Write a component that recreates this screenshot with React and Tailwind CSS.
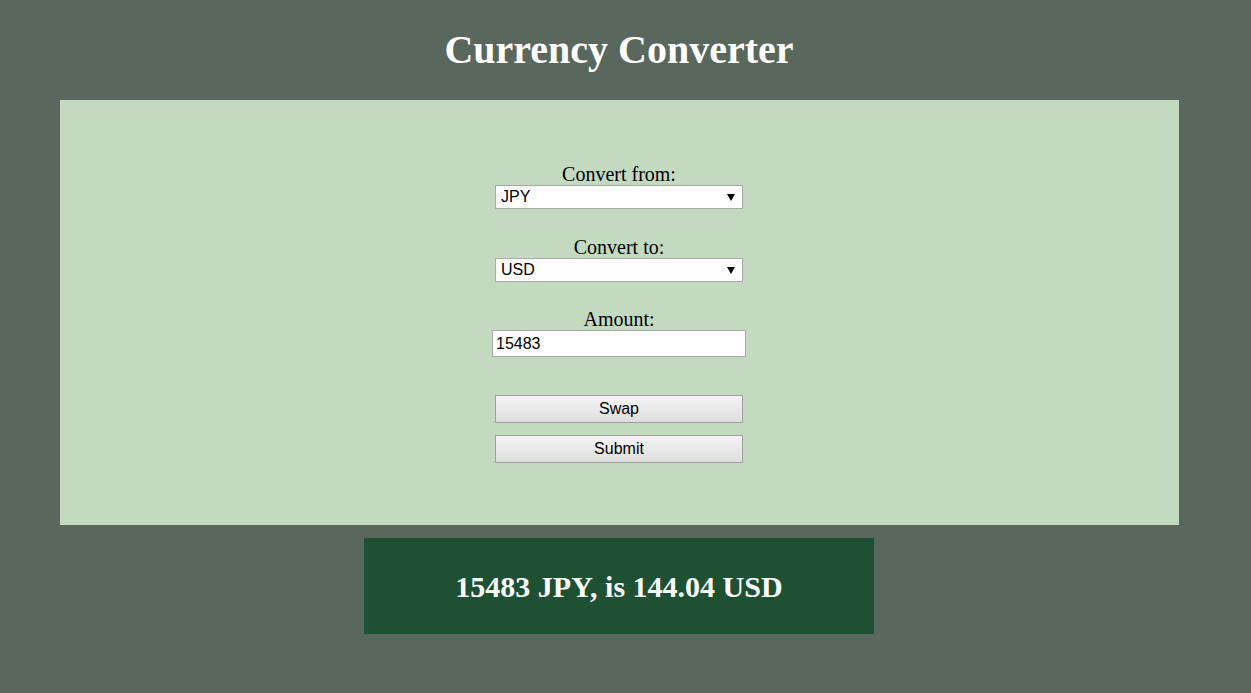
import React from "react";

function Arrow() {
  return (
    <svg className="pointer-events-none absolute right-[8px] top-1/2 -translate-y-1/2" width="8" height="8" viewBox="0 0 8 8">
      <path d="M0 1 L8 1 L4 8 Z" fill="#000" />
    </svg>
  );
}

function Select({ value }) {
  return (
    <div className="relative w-[248px] h-[24px]">
      <select
        defaultValue={value}
        className="appearance-none w-full h-full bg-white border border-[#a9a9a9] pl-[5px] text-[16px] leading-[20px] text-black font-['Liberation_Sans',Arial,sans-serif] outline-none"
      >
        <option>JPY</option>
        <option>USD</option>
        <option>EUR</option>
      </select>
      <Arrow />
    </div>
  );
}

export default function App() {
  return (
    <div className="min-h-[693px] w-full bg-[#5a675c] flex flex-col items-center pr-[13px] font-['Liberation_Serif','Times_New_Roman',serif]">
      <h1 className="mt-[26px] h-[48px] leading-[48px] text-[40px] font-bold text-white">
        Currency Converter
      </h1>
      <div className="mt-[26px] w-[1119px] h-[425px] bg-[#c3dac1] flex flex-col items-center pt-[63px]">
        <label className="text-[20px] leading-[22px] text-black">Convert from:</label>
        <Select value="JPY" />
        <label className="mt-[27px] text-[20px] leading-[22px] text-black">Convert to:</label>
        <Select value="USD" />
        <label className="mt-[26px] text-[20px] leading-[22px] text-black">Amount:</label>
        <input
          defaultValue="15483"
          className="w-[254px] h-[27px] bg-white border border-[#a9a9a9] px-[3px] text-[16px] text-black font-['Liberation_Sans',Arial,sans-serif] outline-none"
        />
        <button className="mt-[38px] w-[248px] h-[28px] border border-[#a0a0a0] bg-gradient-to-b from-[#f5f5f5] to-[#dddddd] text-[16px] text-black font-['Liberation_Sans',Arial,sans-serif]">
          Swap
        </button>
        <button className="mt-[12px] w-[248px] h-[28px] border border-[#a0a0a0] bg-gradient-to-b from-[#f5f5f5] to-[#dddddd] text-[16px] text-black font-['Liberation_Sans',Arial,sans-serif]">
          Submit
        </button>
      </div>
      <div className="mt-[13px] w-[510px] h-[96px] bg-[#1e5034] flex items-center justify-center">
        <span className="text-[30px] font-bold text-white">15483 JPY, is 144.04 USD</span>
      </div>
    </div>
  );
}
